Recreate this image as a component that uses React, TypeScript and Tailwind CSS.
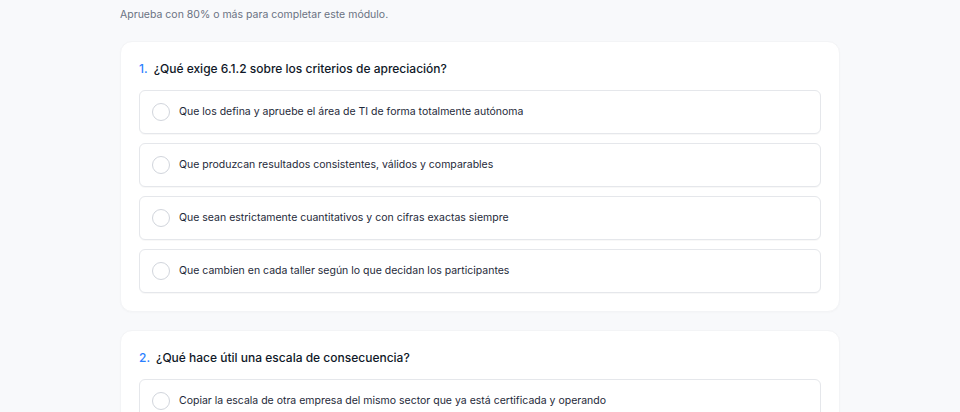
import React from 'react';

type Question = {
  id: number;
  text: string;
  options: string[];
};

const questions: Question[] = [
  {
    id: 1,
    text: '¿Qué exige 6.1.2 sobre los criterios de apreciación?',
    options: [
      'Que los defina y apruebe el área de TI de forma totalmente autónoma',
      'Que produzcan resultados consistentes, válidos y comparables',
      'Que sean estrictamente cuantitativos y con cifras exactas siempre',
      'Que cambien en cada taller según lo que decidan los participantes',
    ],
  },
  {
    id: 2,
    text: '¿Qué hace útil una escala de consecuencia?',
    options: [
      'Copiar la escala de otra empresa del mismo sector que ya está certificada y operando',
      'Que describa los impactos con criterios concretos para cada nivel',
      'Que tenga el mayor número posible de niveles',
      'Que solo la conozca el responsable del SGSI',
    ],
  },
];

function QuestionCard({ q }: { q: Question }) {
  return (
    <div className="rounded-xl border border-gray-100 bg-white p-[18px] shadow-[0_1px_2px_rgba(0,0,0,0.02)]">
      <h3 className="mb-[13px] flex gap-[6px] text-[12px] font-medium leading-[17px] text-gray-900">
        <span className="text-blue-500">{q.id}.</span>
        <span>{q.text}</span>
      </h3>
      <div className="flex flex-col gap-[9px]">
        {q.options.map((opt, i) => (
          <label
            key={i}
            className="flex cursor-pointer items-center gap-[9px] rounded-md border border-gray-200 bg-white px-3 py-3 shadow-[0_1px_1px_rgba(0,0,0,0.03)]"
          >
            <span className="h-[18px] w-[18px] shrink-0 rounded-full border-[1.5px] border-gray-300 bg-white" />
            <span className="text-[10.5px] leading-[16px] text-gray-800">{opt}</span>
          </label>
        ))}
      </div>
    </div>
  );
}

export default function App() {
  return (
    <div
      className="min-h-screen bg-[#f8f9fb]"
      style={{ fontFamily: 'Inter, "Noto Sans", sans-serif' }}
    >
      <div className="mx-auto w-[720px] pt-[7px]">
        <p className="mb-[18px] text-[10.5px] leading-[16px] text-gray-500">
          Aprueba con 80% o más para completar este módulo.
        </p>
        <div className="flex flex-col gap-[18px]">
          {questions.map((q) => (
            <QuestionCard key={q.id} q={q} />
          ))}
        </div>
      </div>
    </div>
  );
}
